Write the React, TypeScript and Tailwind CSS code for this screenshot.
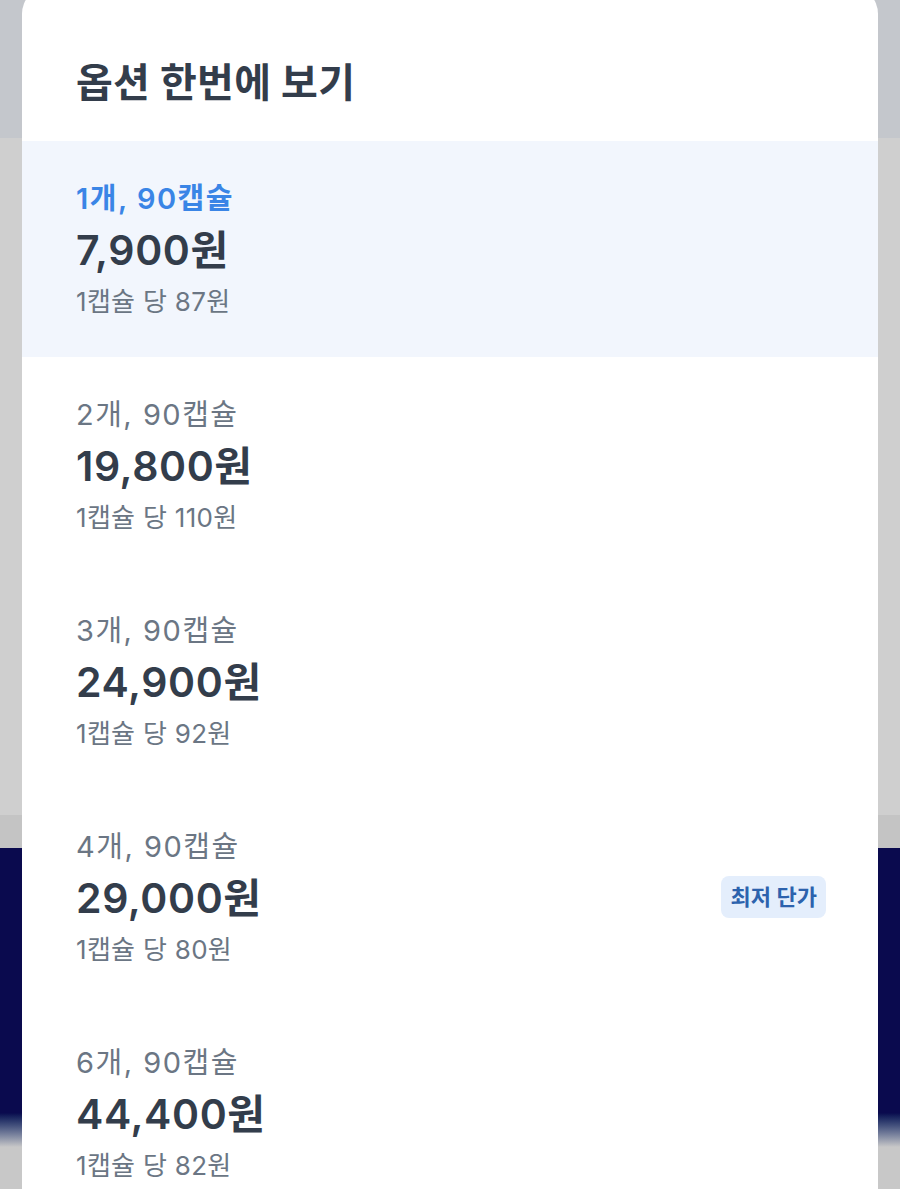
import React from "react";

interface Option {
  label: string;
  price: string;
  perUnit: string;
  badge?: string;
}

const options: Option[] = [
  { label: "1개, 90캡슐", price: "7,900원", perUnit: "1캡슐 당 87원" },
  { label: "2개, 90캡슐", price: "19,800원", perUnit: "1캡슐 당 110원" },
  { label: "3개, 90캡슐", price: "24,900원", perUnit: "1캡슐 당 92원" },
  { label: "4개, 90캡슐", price: "29,000원", perUnit: "1캡슐 당 80원", badge: "최저 단가" },
  { label: "6개, 90캡슐", price: "44,400원", perUnit: "1캡슐 당 82원" },
];

const font = { fontFamily: "Inter, 'Noto Sans CJK KR', sans-serif" };

const OptionRow: React.FC<{ option: Option; selected: boolean }> = ({ option, selected }) => (
  <div
    className={`flex h-[216px] shrink-0 items-center justify-between pl-[54px] pr-[52px] ${
      selected ? "bg-[#f2f6fd]" : "bg-white"
    }`}
  >
    <div className="flex flex-col">
      <span
        className={`mb-[9px] text-[29px] leading-[36px] tracking-[1.5px] ${
          selected ? "font-semibold text-[#3a85e6]" : "text-[#6b7684]"
        }`}
      >
        {option.label}
      </span>
      <span className="mb-[12px] text-[41px] font-semibold leading-[48px] tracking-[0.6px] text-[#333d4b]">
        {option.price}
      </span>
      <span className="text-[26px] leading-[32px] tracking-[0.3px] text-[#6b7684]">{option.perUnit}</span>
    </div>
    {option.badge && (
      <span className="rounded-[8px] bg-[#e4eefc] px-[9px] py-[6px] text-[22px] font-semibold leading-[30px] text-[#2c62ad]">
        {option.badge}
      </span>
    )}
  </div>
);

export default function App() {
  return (
    <div className="relative h-[1189px] w-[900px] overflow-hidden bg-[#c8c8c8]" style={font}>
      {/* page behind the sheet */}
      <div className="flex flex-col">
        <div className="h-[138px] bg-[#c4c7cc]" />
        <div className="h-[677px] bg-[#cfcfcf]" />
        <div className="h-[33px] bg-[#c4c4c4]" />
        <div className="h-[265px] bg-[#0a0a4e]" />
        <div className="h-[34px] bg-gradient-to-b from-[#0a0a4e] to-[#c8c8c8]" />
      </div>

      {/* bottom sheet */}
      <div className="absolute bottom-0 left-[22px] right-[22px] top-[-14px] flex flex-col overflow-hidden rounded-t-[28px] bg-white">
        <div className="h-[155px] shrink-0 px-[54px] pt-[73px]">
          <h1 className="text-[40px] font-bold leading-[48px] tracking-[0.3px] text-[#333d4b]">옵션 한번에 보기</h1>
        </div>
        {options.map((o, i) => (
          <OptionRow key={o.label} option={o} selected={i === 0} />
        ))}
      </div>
    </div>
  );
}
